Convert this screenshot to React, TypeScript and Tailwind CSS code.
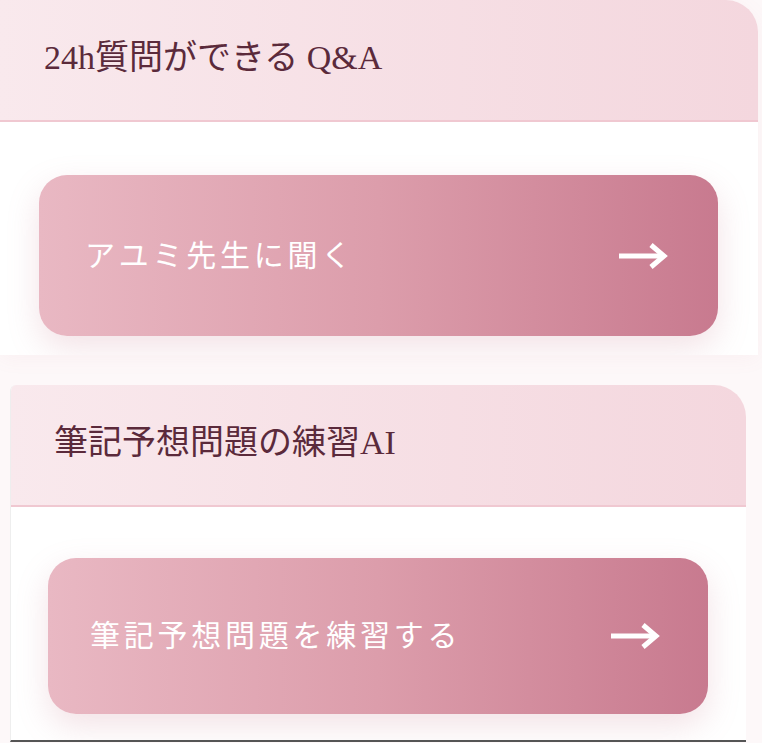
import React from 'react'

const serif = { fontFamily: '"Liberation Serif", "Noto Sans CJK JP", serif' }

function Arrow() {
  return (
    <svg width="50" height="28" viewBox="0 0 50 28" fill="none" className="shrink-0">
      <path d="M1 14H44" stroke="white" strokeWidth="5" />
      <path d="M33 3L46 14L33 25" stroke="white" strokeWidth="5" strokeLinejoin="miter" />
    </svg>
  )
}

function ActionButton({ label, className }: { label: string; className: string }) {
  return (
    <button
      className={`flex items-center justify-between rounded-[28px] bg-gradient-to-r from-[#e9b8c3] via-[#dc9dab] to-[#c87a8f] text-white shadow-[0_12px_32px_rgba(201,122,142,0.22)] ${className}`}
    >
      <span className="text-[30px] tracking-[0.125em] leading-none" style={serif}>
        {label}
      </span>
      <Arrow />
    </button>
  )
}

export default function App() {
  return (
    <div className="w-[762px] h-[743px] overflow-hidden bg-[#fdf8f9]">
      {/* Q&A card */}
      <div className="w-[758px] h-[355px] bg-white rounded-tr-[32px] overflow-hidden shadow-[0_4px_20px_rgba(201,122,142,0.06)]">
        <div className="h-[122px] flex items-center pl-[44px] pb-1 bg-gradient-to-r from-[#f9e9ed] to-[#f4d7de] border-b-2 border-[#f0c8d1]">
          <h2 className="text-[34px] leading-none text-[#5b2a3b]" style={serif}>
            24h質問ができる Q&amp;A
          </h2>
        </div>
        <div className="pt-[53px] px-[39px]">
          <ActionButton label="アユミ先生に聞く" className="w-[679px] h-[161px] pl-[46px] pr-[50px]" />
        </div>
      </div>

      <div className="h-[30px]" />

      {/* Practice card */}
      <div className="ml-[10px] w-[736px] h-[357px] bg-white rounded-tr-[32px] rounded-tl-[6px] overflow-hidden border-l border-[#eeeeee] border-b-2 border-b-[#555555]">
        <div className="h-[122px] flex items-center pl-[43px] pb-1 bg-gradient-to-r from-[#f9e9ed] to-[#f4d7de] border-b-2 border-[#f0c8d1]">
          <h2 className="text-[34px] leading-none text-[#5b2a3b]" style={serif}>
            筆記予想問題の練習AI
          </h2>
        </div>
        <div className="pt-[51px] pl-[37px]">
          <ActionButton label="筆記予想問題を練習する" className="w-[660px] h-[156px] pl-[42px] pr-[48px]" />
        </div>
      </div>
    </div>
  )
}
